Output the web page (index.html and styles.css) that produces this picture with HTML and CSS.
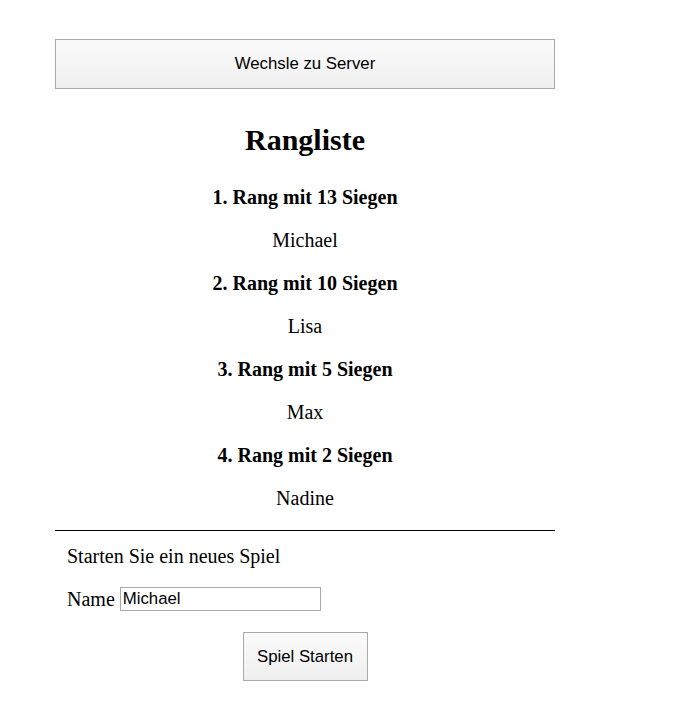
FILE: index.html
```html
<!DOCTYPE html>
<html lang="de">
<head>
<meta charset="utf-8">
<title>Rangliste</title>
<link rel="stylesheet" href="styles.css">
</head>
<body>
<div class="page">
  <button class="btn btn-wide" type="button">Wechsle zu Server</button>
  <h1 class="title">Rangliste</h1>
  <div class="ranks">
    <p class="rank">1. Rang mit 13 Siegen</p>
    <p class="player">Michael</p>
    <p class="rank">2. Rang mit 10 Siegen</p>
    <p class="player">Lisa</p>
    <p class="rank">3. Rang mit 5 Siegen</p>
    <p class="player">Max</p>
    <p class="rank">4. Rang mit 2 Siegen</p>
    <p class="player">Nadine</p>
  </div>
  <hr class="divider">
  <div class="newgame">
    <p class="lead">Starten Sie ein neues Spiel</p>
    <label class="namerow">Name <input class="name-input" type="text" value="Michael"></label>
    <div class="start-row"><button class="btn btn-start" type="button">Spiel Starten</button></div>
  </div>
</div>
</body>
</html>
```

FILE: styles.css
```css
html, body {
  margin: 0;
  padding: 0;
  background: #fff;
}
body {
  font-family: "Liberation Serif", "Times New Roman", serif;
  font-size: 20px;
  color: #000;
}
.page {
  width: 500px;
  margin-left: 55px;
  padding-top: 39px;
  display: flex;
  flex-direction: column;
}
.btn {
  font-family: "Liberation Sans", Arial, sans-serif;
  font-size: 16.8px;
  color: #000;
  background: linear-gradient(#fbfbfb, #efefef);
  border: 1px solid #aaa;
  border-radius: 0;
  padding: 0;
  height: 50px;
  cursor: pointer;
}
.btn-wide {
  width: 500px;
}
.title {
  font-size: 30px;
  font-weight: bold;
  text-align: center;
  margin: 34px 0 0;
  line-height: 34px;
}
.ranks {
  display: flex;
  flex-direction: column;
  align-items: center;
  gap: 22px;
  margin-top: 30px;
}
.ranks p {
  margin: 0;
  line-height: 21px;
}
.rank {
  font-weight: bold;
}
.divider {
  width: 500px;
  margin: 21px 0 0;
  border: 0;
  border-top: 1px solid #000;
  height: 0;
}
.newgame {
  padding: 0 12px;
  display: flex;
  flex-direction: column;
}
.lead {
  margin: 15px 0 0;
  line-height: 21px;
}
.namerow {
  margin-top: 20px;
  display: flex;
  align-items: center;
  gap: 5px;
  line-height: 21px;
}
.name-input {
  font-family: "Liberation Sans", Arial, sans-serif;
  font-size: 16.8px;
  width: 201px;
  height: 24px;
  box-sizing: border-box;
  border: 1px solid #aaa;
  padding: 0 2px;
  margin: 0;
}
.start-row {
  display: flex;
  justify-content: center;
  margin-top: 21px;
}
.btn-start {
  width: 125px;
  height: 49px;
}
```
